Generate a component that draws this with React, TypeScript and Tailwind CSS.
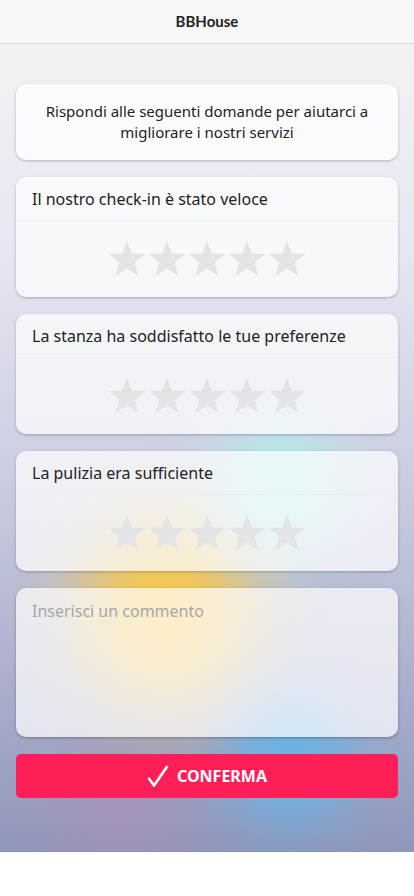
import React from "react";

function Star() {
  return (
    <svg width="40" height="38" viewBox="0 0 24 23" className="block">
      <polygon
        points="12,0.5 14.9,8.2 23.2,8.5 16.7,13.6 19,21.8 12,17.2 5,21.8 7.3,13.6 0.8,8.5 9.1,8.2"
        fill="#e2e4e6"
      />
    </svg>
  );
}

function Stars() {
  return (
    <div className="flex justify-center items-center h-[76px]">
      <Star />
      <Star />
      <Star />
      <Star />
      <Star />
    </div>
  );
}

function Question({ title }: { title: string }) {
  return (
    <div className="rounded-[10px] bg-white/70 shadow-[0_1px_3px_rgba(0,0,0,0.25)]">
      <div className="h-[44px] flex items-center px-4 border-b border-[#ebecef] text-[16px] text-[#222]">
        {title}
      </div>
      <Stars />
    </div>
  );
}

const body = "'Noto Sans', Lato, sans-serif";

export default function App() {
  return (
    <div className="w-[414px] min-h-[896px] bg-white" style={{ fontFamily: body }}>
      <div
        className="h-[44px] bg-[#f7f7f7] border-b border-[#dcdcdc] flex items-center justify-center text-[15px] font-bold text-[#222]"
        style={{ fontFamily: "Lato, sans-serif" }}
      >
        BBHouse
      </div>
      <div className="relative overflow-hidden h-[808px] bg-[linear-gradient(180deg,#f2f2f5_0%,#e6e7f1_25%,#c9cce0_55%,#a9aecc_80%,#8f97bb_100%)]">
        <div className="absolute left-[80px] top-[475px] w-[170px] h-[190px] rounded-full bg-[#ffc93a]/90 blur-[38px]" />
        <div className="absolute left-[225px] top-[385px] w-[110px] h-[120px] rounded-full bg-[#a8f4f0]/90 blur-[32px]" />
        <div className="absolute left-[230px] top-[650px] w-[120px] h-[130px] rounded-full bg-[#62b4e8]/90 blur-[30px]" />
        <div className="absolute left-[60px] top-[725px] w-[120px] h-[90px] rounded-full bg-[#b08cb8]/70 blur-[35px]" />
        <div className="relative z-10 px-4 pt-[40px] flex flex-col gap-[17px]">
          <div className="h-[76px] rounded-[10px] bg-white/80 shadow-[0_1px_3px_rgba(0,0,0,0.25)] flex items-center justify-center text-center text-[15px] leading-[21px] text-[#222] px-4">
            Rispondi alle seguenti domande per aiutarci a migliorare i nostri servizi
          </div>
          <Question title="Il nostro check-in è stato veloce" />
          <Question title="La stanza ha soddisfatto le tue preferenze" />
          <Question title="La pulizia era sufficiente" />
          <textarea
            placeholder="Inserisci un commento"
            className="h-[149px] rounded-[10px] bg-white/70 shadow-[0_1px_3px_rgba(0,0,0,0.3)] px-4 pt-[11px] text-[16px] leading-[24px] text-[#222] placeholder:text-[#a6a6a6] resize-none outline-none"
            style={{ fontFamily: body }}
          />
          <button className="h-[44px] rounded-[5px] bg-[#ff1e56] text-white flex items-center justify-center gap-[8px] text-[16px] font-bold">
            <svg width="22" height="22" viewBox="0 0 22 22" className="block">
              <path d="M1.5 13 L7 20.5 L20.5 1" fill="none" stroke="white" strokeWidth="2.6" />
            </svg>
            CONFERMA
          </button>
        </div>
      </div>
    </div>
  );
}
